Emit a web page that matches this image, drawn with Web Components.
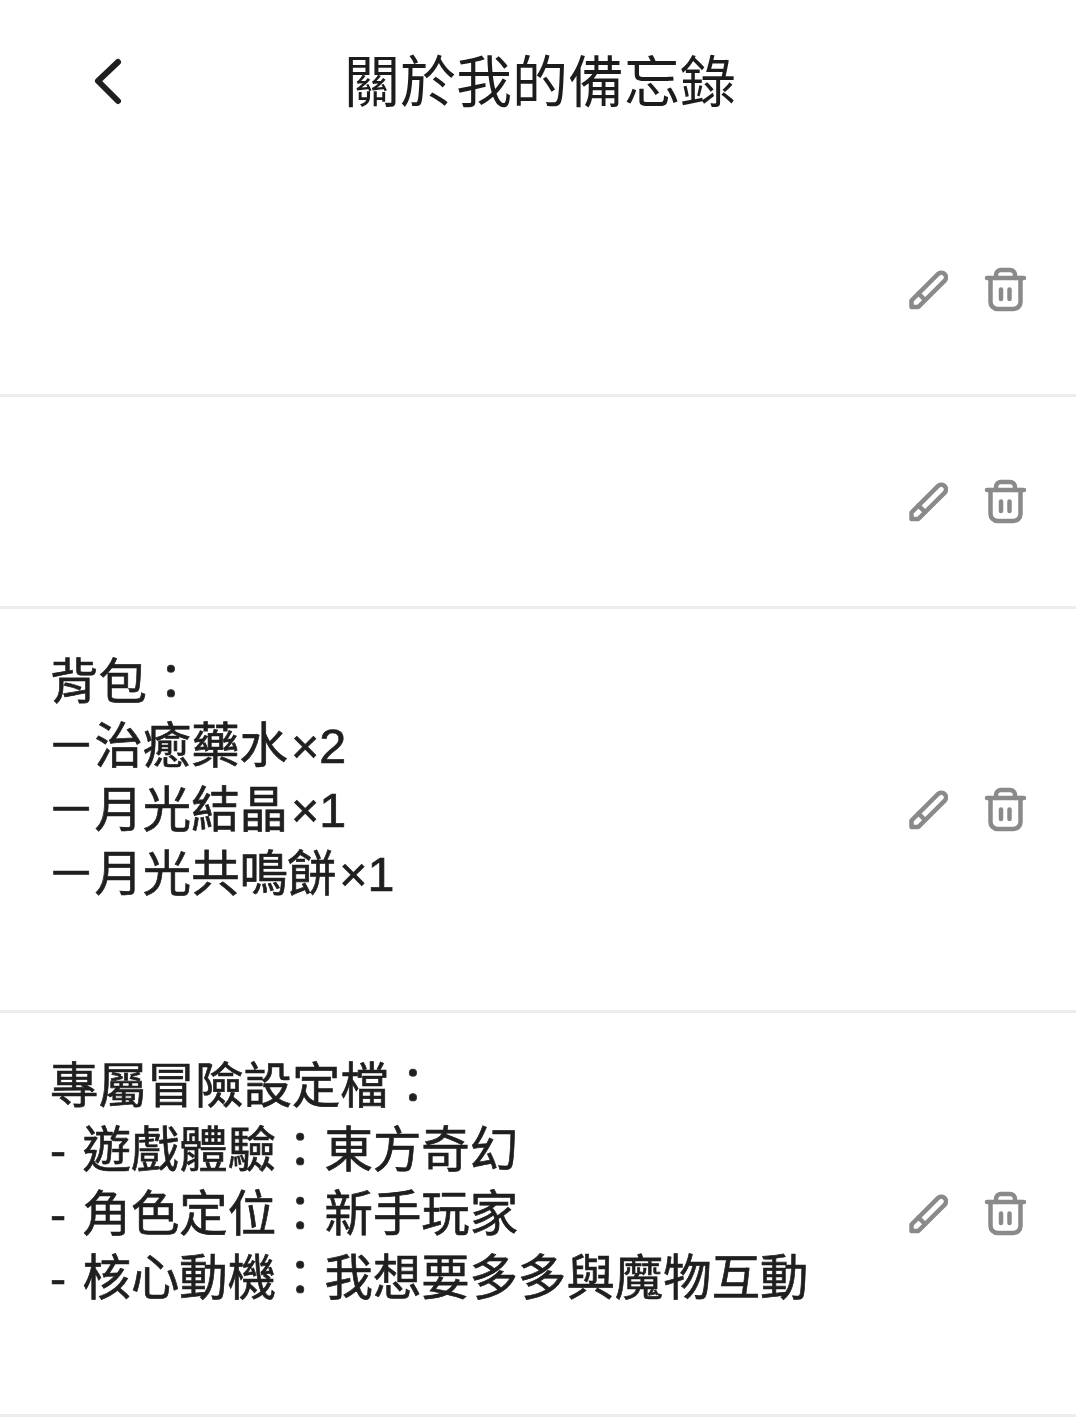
<!DOCTYPE html>
<html lang="zh-Hant">
<head>
<meta charset="utf-8">
<title>關於我的備忘錄</title>
<style>
    html, body {
        margin: 0;
        background: #fff;
        font-family: "Liberation Sans", "Noto Sans CJK TC", sans-serif;
        color: #1f1f1f;
    }
    /* the wide dash sits a little tighter than a full em in the original */
    .dash {
        margin-left: -3px;
        margin-right: -1px;
    }
    .times {
        margin-left: 3px;
    }
</style>
</head>
<body>
<memo-page>
    <memo-header>關於我的備忘錄</memo-header>
    <memo-row></memo-row>
    <memo-row></memo-row>
    <memo-row>背包：
<span class="dash">－</span>治癒藥水<span class="times">×2</span>
<span class="dash">－</span>月光結晶<span class="times">×1</span>
<span class="dash">－</span>月光共鳴餅<span class="times">×1</span></memo-row>
    <memo-row>專屬冒險設定檔：
- 遊戲體驗：東方奇幻
- 角色定位：新手玩家
- 核心動機：我想要多多與魔物互動</memo-row>
</memo-page>

<script>
class MemoPage extends HTMLElement {
    constructor() {
        super();
        this.attachShadow({mode: 'open'});
    }
    connectedCallback() {
        this.shadowRoot.innerHTML = `<style>
        :host {
            display: flex;
            flex-direction: column;
            background: #fff;
        }
        </style><slot></slot>`;
    }
}

class MemoHeader extends HTMLElement {
    constructor() {
        super();
        this.attachShadow({mode: 'open'});
    }
    connectedCallback() {
        this.shadowRoot.innerHTML = `<style>
        :host {
            display: grid;
            grid-template-columns: 1fr auto 1fr;
            align-items: center;
            height: 185px;
            padding-bottom: 23px;
            box-sizing: border-box;
        }
        svg {
            display: block;
            margin-left: 90px;
        }
        h1 {
            margin: 0;
            padding: 4px 0 0 4px;
            font-size: 56px;
            line-height: 72px;
            font-weight: 400;
            color: #1c1c1c;
        }
        </style>
        <svg width="36" height="52" viewBox="0 0 36 52" fill="none" stroke="#1f1f1f" stroke-width="6" stroke-linecap="round" stroke-linejoin="round">
            <path d="M28 7 L8 26 L28 46"/>
        </svg>
        <h1><slot></slot></h1>
        <span></span>`;
    }
}

class MemoRow extends HTMLElement {
    constructor() {
        super();
        this.attachShadow({mode: 'open'});
    }
    connectedCallback() {
        this.shadowRoot.innerHTML = `<style>
        :host {
            display: flex;
            align-items: center;
            justify-content: space-between;
            border-bottom: 3px solid #ececec;
        }
        .text {
            padding: 41px 0 104px 50px;
            font-size: 48.4px;
            line-height: 64px;
            min-height: 64px;
            font-weight: 400;
            -webkit-text-stroke: 0.7px #1f1f1f;
            white-space: pre-line;
            word-spacing: 3px;
        }
        .actions {
            display: flex;
            align-items: center;
            gap: 35px;
            padding-right: 49px;
        }
        svg {
            display: block;
        }
        </style>
        <div class="text"><slot></slot></div>
        <div class="actions">
            <svg width="40" height="40" viewBox="0 0 40 40" fill="none" stroke="#8a8a8a" stroke-width="4.500" stroke-linecap="round" stroke-linejoin="round">
                <path d="M3.500 30.500 L30.400 3.700 A4.700 4.700 0 0 1 37 10.300 L10.300 37 L3.500 37 Z"/>
                <path d="M10.500 23.500 L17 30"/>
            </svg>
            <svg width="44" height="48" viewBox="0 0 44 48" fill="none" stroke="#8a8a8a" stroke-width="4.500" stroke-linecap="round" stroke-linejoin="round">
                <path d="M4 12 H41"/>
                <path d="M13 12 V9 A5 5 0 0 1 18 4 H27 A5 5 0 0 1 32 9 V12"/>
                <path d="M7.500 12 V36 A7 7 0 0 0 14.500 43 H30.500 A7 7 0 0 0 37.500 36 V12"/>
                <path d="M18 23.500 V33"/>
                <path d="M26.500 23.500 V33"/>
            </svg>
        </div>`;
    }
}

customElements.define('memo-page', MemoPage);
customElements.define('memo-header', MemoHeader);
customElements.define('memo-row', MemoRow);
</script>
</body>
</html>
